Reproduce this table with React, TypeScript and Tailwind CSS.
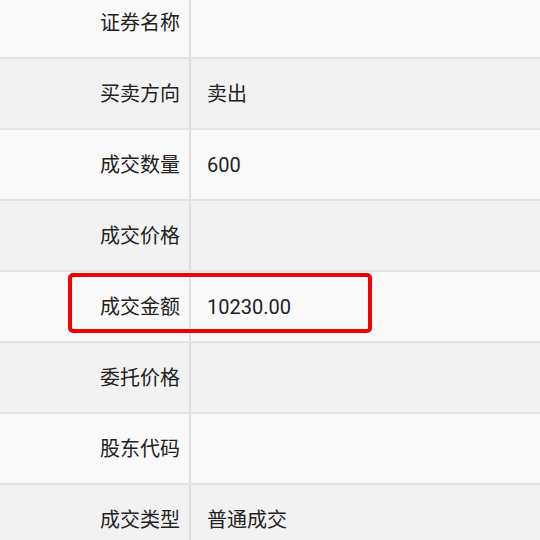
import React from "react";

const rows: { label: string; value: string }[] = [
  { label: "证券名称", value: "" },
  { label: "买卖方向", value: "卖出" },
  { label: "成交数量", value: "600" },
  { label: "成交价格", value: "" },
  { label: "成交金额", value: "10230.00" },
  { label: "委托价格", value: "" },
  { label: "股东代码", value: "" },
  { label: "成交类型", value: "普通成交" },
];

export default function App() {
  return (
    <div
      className="w-[540px] h-[540px] overflow-hidden bg-[#f9f9f9] text-[#222222]"
      style={{ fontFamily: 'Roboto, "Noto Sans CJK SC", sans-serif' }}
    >
      <div className="flex flex-col -mt-[12px]">
        {rows.map((row, i) => (
          <div
            key={row.label}
            className={`relative flex h-[71px] shrink-0 border-b-2 border-[#e4e4e4] ${
              i % 2 === 0 ? "bg-[#f9f9f9]" : "bg-[#f2f2f2]"
            }`}
          >
            <div className="w-[189px] shrink-0 flex items-center justify-end pr-[9px] text-[20px]">
              {row.label}
            </div>
            <div className="w-[2px] shrink-0 bg-[#e0e0e0]" />
            <div className="flex-1 flex items-center pl-[16px] text-[20px]">
              {row.value}
            </div>
            {row.label === "成交金额" && (
              <div className="absolute left-[68px] top-[1px] w-[304px] h-[60px] border-[4px] border-[#f40000] rounded-[5px]" />
            )}
          </div>
        ))}
      </div>
    </div>
  );
}
